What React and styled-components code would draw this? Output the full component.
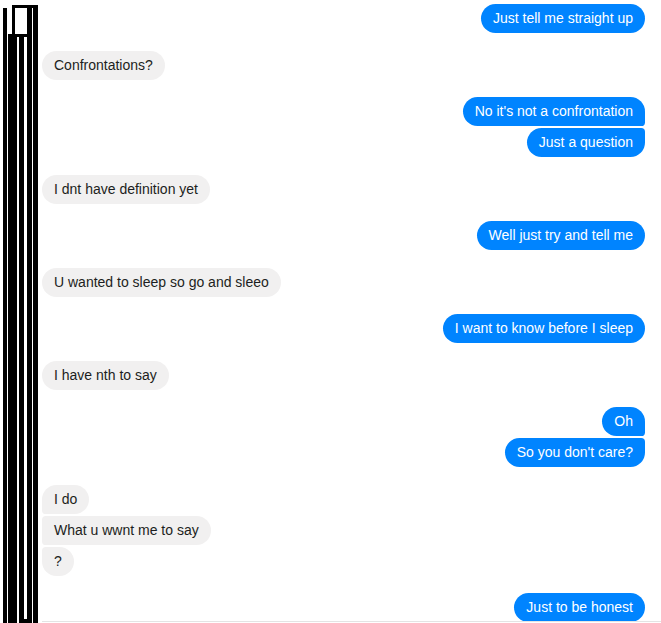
import React from "react";
import styled, { createGlobalStyle, css } from "styled-components";

const Global = createGlobalStyle`
  html, body { margin: 0; padding: 0; background: #fff; }
  body { font-family: "Liberation Sans", Arial, sans-serif; }
`;

const Page = styled.div`
  display: flex;
  width: 661px;
  height: 623px;
  overflow: hidden;
  background: #fff;
`;

const Redaction = styled.div`
  flex: 0 0 42px;
  height: 623px;
  svg { display: block; }
`;

const Main = styled.div`
  flex: 1;
  display: flex;
  flex-direction: column;
  min-width: 0;
`;

const Thread = styled.div`
  flex: 1;
  display: flex;
  flex-direction: column;
  gap: 17.5px;
  padding: 4px 16px 0 0;
  overflow: hidden;
`;

const Composer = styled.div`
  height: 1px;
  border-top: 1px solid #e4e4e4;
  flex: 0 0 auto;
`;

const Group = styled.div`
  display: flex;
  flex-direction: column;
  gap: 2px;
  align-items: ${(p) => (p.$mine ? "flex-end" : "flex-start")};
`;

const Bubble = styled.div`
  font-family: "Liberation Sans", Arial, sans-serif;
  font-size: 14px;
  line-height: 17px;
  padding: 6px 12px;
  white-space: nowrap;
  border-radius: 15px;
  ${(p) =>
    p.$mine
      ? css`
          background: #0084ff;
          color: #fff;
          border-top-right-radius: ${p.$first ? "15px" : "4px"};
          border-bottom-right-radius: ${p.$last ? "15px" : "4px"};
        `
      : css`
          background: #f1f0f0;
          color: #1c1e21;
          border-top-left-radius: ${p.$first ? "15px" : "4px"};
          border-bottom-left-radius: ${p.$last ? "15px" : "4px"};
        `}
`;

const groups = [
  { mine: true, msgs: ["Just tell me straight up"] },
  { mine: false, msgs: ["Confrontations?"] },
  { mine: true, msgs: ["No it's not a confrontation", "Just a question"] },
  { mine: false, msgs: ["I dnt have definition yet"] },
  { mine: true, msgs: ["Well just try and tell me"] },
  { mine: false, msgs: ["U wanted to sleep so go and sleeo"] },
  { mine: true, msgs: ["I want to know before I sleep"] },
  { mine: false, msgs: ["I have nth to say"] },
  { mine: true, msgs: ["Oh", "So you don't care?"] },
  { mine: false, msgs: ["I do", "What u wwnt me to say", "?"] },
  { mine: true, msgs: ["Just to be honest"] },
];

function RedactionMarks() {
  return (
    <svg width="42" height="623" viewBox="0 0 42 623">
      <g fill="#000">
        <rect x="3" y="8" width="4" height="615" />
        <rect x="8" y="36" width="9" height="587" />
        <rect x="19" y="36" width="5" height="587" />
        <rect x="27" y="8" width="5" height="615" />
        <rect x="33" y="6" width="5" height="617" />
        <rect x="12" y="5" width="26" height="3" />
        <rect x="12" y="5" width="3" height="31" />
        <rect x="8" y="34" width="22" height="3" />
        <rect x="19" y="619" width="13" height="4" />
      </g>
    </svg>
  );
}

export default function App() {
  return (
    <>
      <Global />
      <Page>
        <Redaction>
          <RedactionMarks />
        </Redaction>
        <Main>
          <Thread>
            {groups.map((g, gi) => (
              <Group key={gi} $mine={g.mine}>
                {g.msgs.map((m, i) => (
                  <Bubble
                    key={i}
                    $mine={g.mine}
                    $first={i === 0}
                    $last={i === g.msgs.length - 1}
                  >
                    {m}
                  </Bubble>
                ))}
              </Group>
            ))}
          </Thread>
          <Composer />
        </Main>
      </Page>
    </>
  );
}
